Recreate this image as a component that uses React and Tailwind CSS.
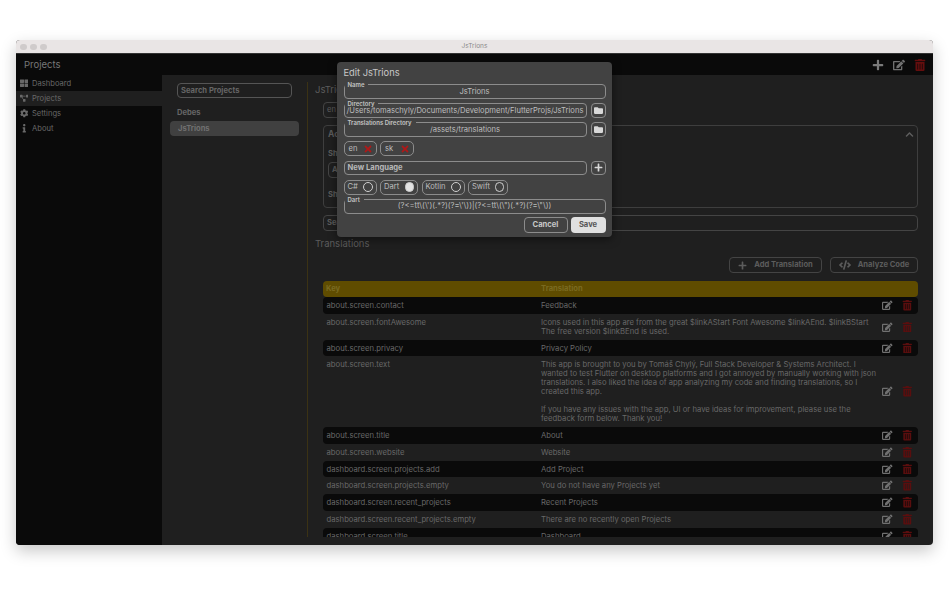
import { FaPlus, FaEdit, FaTrashAlt, FaFolder, FaCode, FaTimes, FaCog, FaInfo, FaThLarge, FaProjectDiagram, FaChevronUp } from "react-icons/fa";

const nav = [
  { label: "Dashboard", Icon: FaThLarge },
  { label: "Projects", Icon: FaProjectDiagram, active: true },
  { label: "Settings", Icon: FaCog },
  { label: "About", Icon: FaInfo },
];

const rows = [
  { k: "about.screen.contact", t: ["Feedback"], h: "h-[17px]" },
  { k: "about.screen.fontAwesome", t: ["Icons used in this app are from the great $linkAStart Font Awesome $linkAEnd. $linkBStart", "The free version $linkBEnd is used."], h: "h-[26px]" },
  { k: "about.screen.privacy", t: ["Privacy Policy"], h: "h-[16px]" },
  {
    k: "about.screen.text",
    t: [
      "This app is brought to you by Tomáš Chylý, Full Stack Developer & Systems Architect. I",
      "wanted to test Flutter on desktop platforms and I got annoyed by manually working with json",
      "translations. I also liked the idea of app analyzing my code and finding translations, so I",
      "created this app.",
      "\u00a0",
      "If you have any issues with the app, UI or have ideas for improvement, please use the",
      "feedback form below. Thank you!",
    ],
    h: "h-[71px]",
  },
  { k: "about.screen.title", t: ["About"], h: "h-[17px]" },
  { k: "about.screen.website", t: ["Website"], h: "h-[17px]" },
  { k: "dashboard.screen.projects.add", t: ["Add Project"], h: "h-[16px]" },
  { k: "dashboard.screen.projects.empty", t: ["You do not have any Projects yet"], h: "h-[17px]" },
  { k: "dashboard.screen.recent_projects", t: ["Recent Projects"], h: "h-[17px]" },
  { k: "dashboard.screen.recent_projects.empty", t: ["There are no recently open Projects"], h: "h-[17px]" },
  { k: "dashboard.screen.title", t: ["Dashboard"], h: "h-[17px]" },
];

function Field({ label, value, bold, className = "" }) {
  return (
    <div className={`relative flex h-[14.5px] flex-1 items-center justify-center rounded-[4px] border border-[#8c8c8c] text-[#bdbdbd] ${className}`}>
      {label && (
        <span className="absolute left-0 top-[-4px] bg-[#424242] pl-[3px] pr-[4px] text-[6px] leading-[7px] font-semibold text-[#c4c4c4]">{label}</span>
      )}
      <span className={`whitespace-nowrap ${bold ? "w-full pl-[3px] font-bold text-[#b8b8b8]" : ""}`}>{value}</span>
    </div>
  );
}

function SquareButton({ children }) {
  return (
    <div className="flex h-[14.5px] w-[15px] shrink-0 items-center justify-center rounded-[4px] border border-[#8c8c8c] text-[9px] text-[#d8d8d8]">
      {children}
    </div>
  );
}

function Chip({ label, on, w }) {
  return (
    <div className={`flex h-[15px] items-center justify-between rounded-[5px] border border-[#8c8c8c] px-[3px] text-[7.6px] text-[#bdbdbd] ${w}`}>
      <span>{label}</span>
      <span className={`h-[9.5px] w-[9.5px] rounded-full border border-[#d0d0d0] ${on ? "bg-[#e4e4e4]" : ""}`} />
    </div>
  );
}

function LangChip({ label }) {
  return (
    <div className="flex h-[15px] w-[33.5px] items-center justify-between rounded-[5px] border border-[#8c8c8c] pl-[4px] pr-[3px] text-[7.6px] text-[#bdbdbd]">
      <span>{label}</span>
      <FaTimes className="text-[10px] text-[#b01818]" />
    </div>
  );
}

function EditDialog() {
  return (
    <div className="absolute left-[321px] top-[8px] flex h-[175px] w-[275px] flex-col rounded-[4px] bg-[#424242] px-[6.5px] pt-[5px] shadow-[0_2px_8px_rgba(0,0,0,0.5)]">
      <p className="mb-[5px] text-[9.3px] leading-[12px] text-[#c8c8c8]">Edit JsTrions</p>
      <div className="flex flex-col gap-[4.5px] text-[7.6px]">
        <div className="flex"><Field label="Name" value="JsTrions" /></div>
        <div className="flex gap-[4px]">
          <Field label="Directory" value="/Users/tomaschyly/Documents/Development/FlutterProjs/JsTrions" />
          <SquareButton><FaFolder /></SquareButton>
        </div>
        <div className="flex gap-[4px]">
          <Field label="Translations Directory" value="/assets/translations" />
          <SquareButton><FaFolder /></SquareButton>
        </div>
        <div className="flex gap-[3px]">
          <LangChip label="en" />
          <LangChip label="sk" />
        </div>
        <div className="flex gap-[4px]">
          <Field value="New Language" bold />
          <SquareButton><FaPlus /></SquareButton>
        </div>
        <div className="flex gap-[3.5px]">
          <Chip label="C#" w="w-[33px]" />
          <Chip label="Dart" on w="w-[38px]" />
          <Chip label="Kotlin" w="w-[43px]" />
          <Chip label="Swift" w="w-[40px]" />
        </div>
        <div className="flex"><Field label="Dart" value={"(?<=tt\\(\\')(.*?)(?=\\'\\))|(?<=tt\\(\\\")(.*?)(?=\\\"\\))"} className="text-[7.7px]" /></div>
      </div>
      <div className="mt-[3.5px] flex justify-end gap-[3px]">
        <div className="flex h-[16px] w-[44px] items-center justify-center rounded-[4px] border border-[#8c8c8c] text-[7.6px] font-bold text-[#c8c8c8]">Cancel</div>
        <div className="flex h-[16px] w-[35px] items-center justify-center rounded-[4px] bg-[#e0e0e0] text-[7.6px] font-bold text-[#555555]">Save</div>
      </div>
    </div>
  );
}

export default function App() {
  return (
    <div className="h-[594px] w-[950px] overflow-hidden bg-white pl-[16px] pt-[40px] [font-family:Inter,sans-serif]">
      <div className="flex h-[505px] w-[917px] flex-col overflow-hidden rounded-[4px] bg-[#1f1f1f] shadow-[0_6px_16px_rgba(0,0,0,0.22)]">
        <div className="relative flex h-[14px] shrink-0 items-center justify-center border-b border-[#333333] bg-[#e9e5e5] pt-[1px]">
          <div className="absolute left-[4px] flex gap-[3.5px]">
            <span className="h-[6.5px] w-[6.5px] rounded-full bg-[#cfcbcb]" />
            <span className="h-[6.5px] w-[6.5px] rounded-full bg-[#cfcbcb]" />
            <span className="h-[6.5px] w-[6.5px] rounded-full bg-[#cfcbcb]" />
          </div>
          <span className="text-[6.5px] text-[#8a8a8a]">JsTrions</span>
        </div>

        <div className="relative flex min-h-0 flex-1 flex-col">
          <div className="flex h-[21px] shrink-0 items-center justify-between bg-[#0a0a0a] pl-[8px] pr-[7px]">
            <span className="mt-[2px] text-[9.5px] text-[#777777]">Projects</span>
            <div className="flex items-center gap-[9px] text-[12px]">
              <FaPlus className="text-[#7a7a7a]" />
              <FaEdit className="text-[#707070]" />
              <FaTrashAlt className="text-[#640e0e]" />
            </div>
          </div>

          <div className="flex min-h-0 flex-1">
            <div className="flex w-[146px] shrink-0 flex-col bg-[#0a0a0a] pt-[1px]">
              {nav.map(({ label, Icon, active }) => (
                <div key={label} className={`flex h-[15px] items-center gap-[3px] pl-[3px] text-[7.6px] text-[#686868] ${active ? "bg-[#1f1f1f]" : ""}`}>
                  <span className="flex w-[10px] justify-center text-[8.5px]"><Icon /></span>
                  <span>{label}</span>
                </div>
              ))}
            </div>

            <div className="flex w-[145px] shrink-0 flex-col pl-[8px] pr-[8px] pt-[8px]">
              <div className="ml-[7px] flex h-[15px] w-[115px] items-center rounded-[4px] border border-[#555555] pl-[3px] text-[7.6px] font-bold text-[#666666]">Search Projects</div>
              <p className="ml-[7px] mt-[9px] text-[7.6px] leading-[11px] font-bold text-[#666666]">Debes</p>
              <div className="mt-[3px] flex h-[15px] items-center rounded-[4px] bg-[#404040] pl-[8px] text-[7.6px] font-bold text-[#707070]">JsTrions</div>
            </div>

            <div className="mb-[8px] mt-[7px] flex min-h-0 flex-1 flex-col overflow-hidden border-l border-[#3b3214] pl-[7px] pr-[15px]">
              <p className="mt-[1px] text-[9.5px] leading-[13px] text-[#5c5c5c]">JsTrions</p>
              <div className="ml-[8px] mt-[6px] flex h-[16px] w-[40px] items-center rounded-[4px] border border-[#444444] pl-[3px] text-[7.6px] text-[#5c5c5c]">en</div>
              <div className="relative ml-[8px] mt-[7px] h-[83px] shrink-0 rounded-[4px] border border-[#3e3e3e] px-[4px] text-[7.6px] font-bold text-[#5c5c5c]">
                <p className="mt-[1.5px] text-[8.5px] leading-[12px]">Actions</p>
                <p className="mt-[8px] leading-[11px]">Show</p>
                <div className="mt-[3px] flex h-[16px] w-[40px] items-center rounded-[4px] border border-[#444444] pl-[3px]">All</div>
                <p className="mt-[11.5px] leading-[11px]">Show</p>
                <FaChevronUp className="absolute right-[3px] top-[4px] text-[9px] text-[#5e5e5e]" />
              </div>
              <div className="ml-[8px] mt-[7px] flex h-[16px] shrink-0 items-center rounded-[4px] border border-[#444444] pl-[3px] text-[7.6px] font-bold text-[#5c5c5c]">Search</div>
              <p className="mt-[6px] text-[9.5px] leading-[13px] text-[#5c5c5c]">Translations</p>
              <div className="mt-[7px] flex shrink-0 justify-end gap-[8px]">
                <div className="flex h-[16px] w-[93px] items-center justify-center gap-[7px] rounded-[4px] border border-[#444444] text-[7.6px] font-bold text-[#5c5c5c]">
                  <FaPlus className="text-[9px]" />
                  <span>Add Translation</span>
                </div>
                <div className="flex h-[16px] w-[88px] items-center justify-center gap-[7px] rounded-[4px] border border-[#444444] text-[7.6px] font-bold text-[#5c5c5c]">
                  <FaCode className="text-[12px]" />
                  <span>Analyze Code</span>
                </div>
              </div>
              <div className="ml-[8px] mt-[8px] flex min-h-0 flex-1 flex-col overflow-hidden">
                <div className="flex h-[16px] shrink-0 items-center rounded-[4px] bg-[#5f4c00] text-[7.6px] font-bold text-[#7a6a20]">
                  <span className="w-[218px] pl-[3px]">Key</span>
                  <span>Translation</span>
                </div>
                {rows.map((row, i) => (
                  <div key={row.k} className={`flex shrink-0 items-center rounded-[4px] text-[7.7px] leading-[9px] text-[#686868] ${row.h} ${i % 2 === 0 ? "bg-[#0a0a0a]" : ""}`}>
                    <span className="w-[218px] self-start pl-[3.5px] pt-[4px]">{row.k}</span>
                    <div className="w-[330px] self-start whitespace-nowrap pt-[4px]">
                      {row.t.map((line, j) => <p key={j}>{line}</p>)}
                    </div>
                    <div className="ml-auto flex items-center gap-[9px] pr-[6px] text-[10.5px]">
                      <FaEdit className="text-[#707070]" />
                      <FaTrashAlt className="text-[#5a0e0e]" />
                    </div>
                  </div>
                ))}
              </div>
            </div>
          </div>

          <EditDialog />
        </div>
      </div>
    </div>
  );
}
